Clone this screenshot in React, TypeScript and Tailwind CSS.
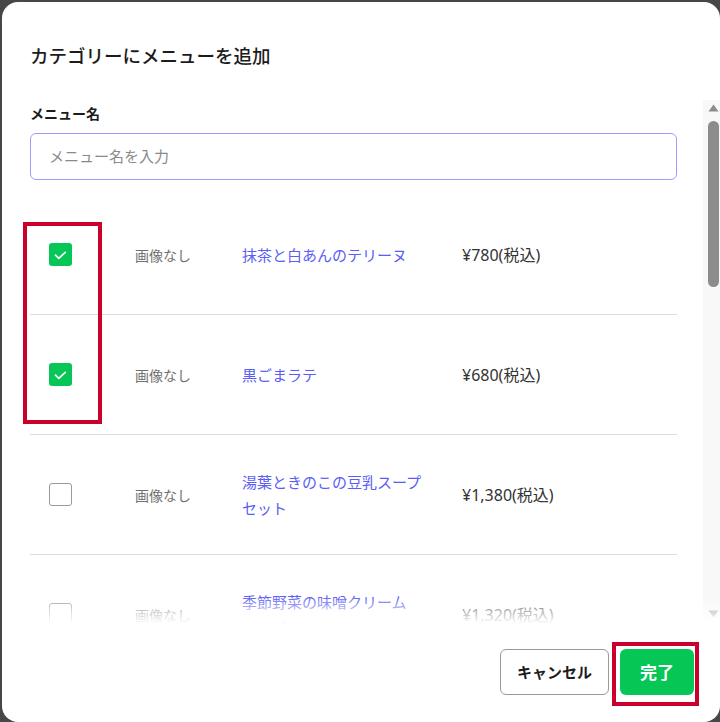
const items = [
  { name: '抹茶と白あんのテリーヌ', tail: '', price: '¥780(税込)', checked: true },
  { name: '黒ごまラテ', tail: '', price: '¥680(税込)', checked: true },
  { name: '湯葉ときのこの豆乳スープ', tail: 'セット', price: '¥1,380(税込)', checked: false },
  { name: '季節野菜の味噌クリーム', tail: 'スープ', price: '¥1,320(税込)', checked: false },
];

function Checkbox({ checked }: { checked: boolean }) {
  if (checked) {
    return (
      <span className="flex h-[23px] w-[23px] shrink-0 items-center justify-center rounded-[3px] bg-[#06c755]">
        <svg width="23" height="23" viewBox="0 0 23 23" fill="none">
          <path d="M6.5 12.2L9.8 15.3L16.3 9.3" stroke="white" strokeWidth="1.7" strokeLinecap="round" strokeLinejoin="round" />
        </svg>
      </span>
    );
  }
  return <span className="h-[23px] w-[23px] shrink-0 rounded-[3px] border-[1.5px] border-[#9a9a9a] bg-white" />;
}

function MenuRow({ name, tail, price, checked }: { name: string; tail: string; price: string; checked: boolean }) {
  return (
    <div className="flex h-[120px] items-center border-b border-[#dedede] pl-[19px]">
      <Checkbox checked={checked} />
      <span className="ml-[63px] w-[107px] shrink-0 text-[14px] leading-[22px] text-[#707070]">画像なし</span>
      <span className="w-[190px] shrink-0 text-[15px] leading-[26px] text-[#5b5ef4]">
        {name}
        {tail && <span className="whitespace-nowrap">{tail}</span>}
      </span>
      <span className="ml-[30px] font-['Noto_Sans','Noto_Sans_CJK_JP',sans-serif] text-[16px] leading-[22px] text-[#333333]">
        {price}
      </span>
    </div>
  );
}

export default function App() {
  return (
    <div
      lang="ja"
      className="relative h-[722px] w-[720px] overflow-hidden bg-[#474747] pl-[2px] pt-[2px] font-['Noto_Sans_CJK_JP',sans-serif]"
    >
      <div className="flex h-full flex-col rounded-[16px] bg-white">
        <h1 className="px-[28px] pt-[38px] text-[18.5px] font-medium leading-[30px] text-[#1c1c1c]">
          カテゴリーにメニューを追加
        </h1>

        <div className="relative mt-[30px] flex h-[524px]">
          <div className="flex-1 overflow-hidden pl-[28px] pr-[26px] pt-[2px]">
            <label className="block text-[14px] font-bold leading-[22px] text-[#1c1c1c]">メニュー名</label>
            <div className="mt-[9px] flex h-[47px] items-center rounded-[6px] border border-[#9c9efa] px-[18px] text-[15px] text-[#8a8a8a]">
              メニュー名を入力
            </div>
            <div className="mt-[15px]">
              {items.map((item) => (
                <MenuRow key={item.name} {...item} />
              ))}
            </div>
          </div>

          <div className="flex w-[17px] flex-col items-center bg-[#f8f8f8] pl-[4px] pt-[4px]">
            <svg width="11" height="8" viewBox="0 0 11 8">
              <path d="M5.5 0.5L10.5 7.5H0.5Z" fill="#8c8c8c" />
            </svg>
            <div className="mt-[9px] h-[166px] w-[11px] rounded-full bg-[#8c8c8c]" />
            <div className="flex-1" />
            <svg width="11" height="8" viewBox="0 0 11 8" className="mb-[6px]">
              <path d="M0.5 0.5H10.5L5.5 7.5Z" fill="#8c8c8c" />
            </svg>
          </div>

          <div className="pointer-events-none absolute inset-x-0 bottom-0 h-[28px] bg-gradient-to-t from-white via-white/60 to-transparent" />
        </div>

        <div className="flex justify-end gap-[11px] pr-[26px] pt-[25px]">
          <button className="h-[46px] w-[109px] rounded-[6px] border border-[#9a9a9a] bg-white text-[15px] font-bold text-[#1c1c1c]">
            キャンセル
          </button>
          <button className="h-[46px] w-[74px] rounded-[6px] bg-[#06c755] text-[17px] font-bold text-white">
            完了
          </button>
        </div>
      </div>

      <div className="pointer-events-none absolute left-[23px] top-[222px] h-[202px] w-[79px] border-4 border-[#c8002b]" />
      <div className="pointer-events-none absolute left-[612px] top-[642px] h-[64px] w-[87px] border-4 border-[#c8002b]" />
    </div>
  );
}
